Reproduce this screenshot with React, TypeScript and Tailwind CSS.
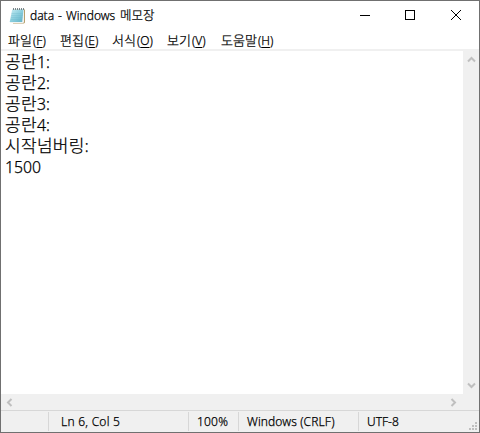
import React from 'react';

const menus = [
  { label: '파일', hotkey: 'F', width: 'w-[52px]' },
  { label: '편집', hotkey: 'E', width: 'w-[52px]' },
  { label: '서식', hotkey: 'O', width: 'w-[55px]' },
  { label: '보기', hotkey: 'V', width: 'w-[54px]' },
  { label: '도움말', hotkey: 'H', width: 'w-[70px]' },
];

const lines = [
  { ko: '공란', rest: '1:' },
  { ko: '공란', rest: '2:' },
  { ko: '공란', rest: '3:' },
  { ko: '공란', rest: '4:' },
  { ko: '시작넘버링', rest: ':' },
  { ko: '', rest: '1500' },
];

const koFont = "font-['Noto_Sans_CJK_KR',sans-serif]";

const NotepadIcon = () => (
  <svg width="17" height="16" viewBox="0 0 17 16">
    <defs>
      <linearGradient id="page" x1="0" y1="0" x2="1" y2="1">
        <stop offset="0" stopColor="#c9edf3" />
        <stop offset=".5" stopColor="#8ccfde" />
        <stop offset="1" stopColor="#5fb0c6" />
      </linearGradient>
    </defs>
    <path d="M4 1.5h12v13l-1 1H4z" fill="#b59f6e" />
    <path d="M3.6 1.5h11.4v12.8l-1 .7H1z" fill="#f0f3f1" />
    <path d="M3.2 1.5h11.3L13.2 14H.7z" fill="url(#page)" />
    <path d="M2.6 5.5h11.2M2.4 7.5h11.2M2 9.5h11.3M1.7 11.5h11.3" stroke="#6cb7cb" strokeWidth=".3" />
    <path d="M4.5 0v2M6.5 0v2M8.5 0v2M10.5 0v2M12.5 0v2M14.5 0v2" stroke="#5b676d" strokeWidth=".8" />
  </svg>
);

const Chevron = ({ d }: { d: string }) => (
  <svg width="9" height="9" viewBox="0 0 9 9" fill="none" stroke="#bfbfbf" strokeWidth="2">
    <path d={d} />
  </svg>
);

const App: React.FC = () => {
  return (
    <div className="flex h-[433px] w-[480px] flex-col overflow-hidden border border-[#707070] bg-white font-['Noto_Sans','Noto_Sans_CJK_KR',sans-serif] text-[12px] font-light text-black [-webkit-text-stroke:0.25px_#000]">
      {/* Title bar */}
      <div className="flex h-[29px] shrink-0 items-center pl-[8px]">
        <NotepadIcon />
        <div className="flex flex-1 items-baseline whitespace-pre pl-[4px] leading-[18px]">
          <span className="w-[28px]">data </span>
          <span className="w-[8px]">- </span>
          <span className="w-[54px]">Windows </span>
          <span className={`${koFont} text-[12.5px]`}>메모장</span>
        </div>
        <div className="mb-px flex w-[137px] shrink-0">
          <button className="flex w-[46px] items-center justify-center">
            <svg width="10" height="10" shapeRendering="crispEdges"><path d="M0 5h10v1H0z" /></svg>
          </button>
          <button className="flex w-[44px] items-center justify-center">
            <svg width="10" height="10" fill="none" stroke="#000" shapeRendering="crispEdges"><path d="M.5.5h9v9h-9z" /></svg>
          </button>
          <button className="flex w-[47px] items-center justify-center pl-px">
            <svg width="10" height="10" stroke="#000"><path d="M0 0l10 10M10 0L0 10" /></svg>
          </button>
        </div>
      </div>

      {/* Menu bar */}
      <div className="flex h-[21px] shrink-0 items-center border-b-2 border-[#f0f0f0] pl-[7px] pt-px">
        {menus.map((m) => (
          <div key={m.hotkey} className={`flex shrink-0 items-baseline leading-[18px] ${m.width}`}>
            <span className={`${koFont} text-[13px]`}>{m.label}</span>
            <span className="pl-px text-[12px]">(<span className="underline decoration-1 underline-offset-2">{m.hotkey}</span>)</span>
          </div>
        ))}
      </div>

      {/* Editor */}
      <div className="flex h-[343px] shrink-0">
        <div className="flex-1 pl-[4px] pt-px">
          {lines.map((l) => (
            <div key={l.ko + l.rest} className="flex h-[21px] items-baseline leading-[21px]">
              {l.ko && <span className={`${koFont} text-[17px] leading-[15px] tracking-[0.3px]`}>{l.ko}</span>}
              <span className="text-[15.8px]">{l.rest}</span>
            </div>
          ))}
        </div>
        <div className="flex w-[16px] flex-col items-center justify-between bg-[#f0f0f0] py-[4px]">
          <Chevron d="M1 6.5l3.5-3.5L8 6.5" />
          <Chevron d="M1 2.5L4.5 6 8 2.5" />
        </div>
      </div>
      <div className="flex h-[16px] shrink-0 items-center justify-between bg-[#f0f0f0] pl-[4px] pr-[21px]">
        <Chevron d="M6.5 1L3 4.5 6.5 8" />
        <Chevron d="M2.5 1L6 4.5 2.5 8" />
      </div>

      {/* Status bar */}
      <div className="flex h-[22px] shrink-0 border-t border-[#d7d7d7] bg-[#f0f0f0] pt-px leading-[20px]">
        <div className="h-[19px] w-[48px] border-r border-[#d7d7d7]" />
        <div className="h-[19px] w-[140px] border-r border-[#d7d7d7] pl-[12px] tracking-[0.25px]">Ln 6, Col 5</div>
        <div className="h-[19px] w-[50px] border-r border-[#d7d7d7] pl-[8px] tracking-[0.2px]">100%</div>
        <div className="h-[19px] w-[120px] border-r border-[#d7d7d7] pl-[8px] tracking-[0.1px]">Windows (CRLF)</div>
        <div className="flex flex-1 items-end justify-between pl-[8px]">
          <span className="h-[20px]">UTF-8</span>
          <svg width="10" height="11" fill="#bfbfbf" shapeRendering="crispEdges">
            <path d="M6 1h2v2H6zM3 4h2v2H3zM6 4h2v2H6zM0 7h2v2H0zM3 7h2v2H3zM6 7h2v2H6z" />
          </svg>
        </div>
      </div>
    </div>
  );
};

export default App;
